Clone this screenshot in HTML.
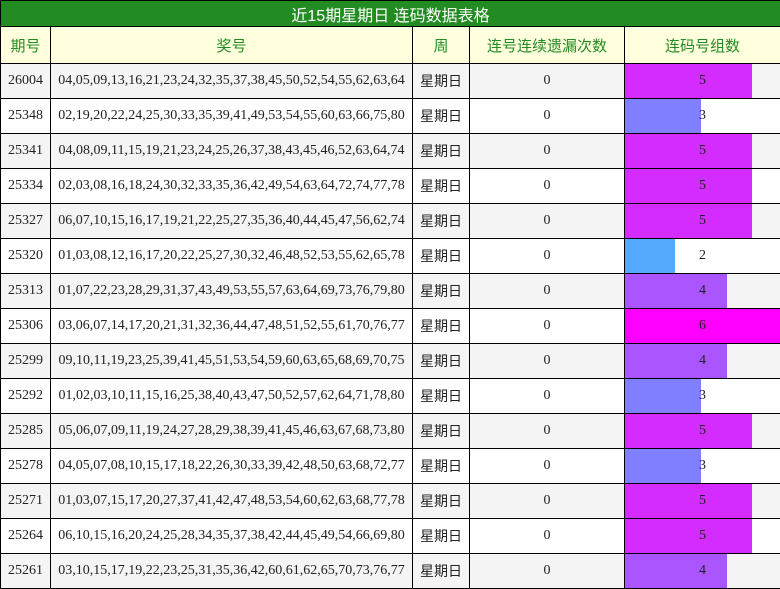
<!DOCTYPE html>
<html><head><meta charset="utf-8"><style>
body{margin:0;background:#fff;}
table{border-collapse:collapse;table-layout:fixed;width:780px;font-family:"Liberation Serif","Noto Sans CJK SC",serif;font-size:14px;color:#222;}
td{border:1px solid #000;text-align:center;padding:0;height:34px;white-space:nowrap;overflow:hidden;}
tr:nth-child(odd) td{background:#f4f4f4;}
tr:nth-child(even) td{background:#fff;}
tr.t td{background:#228b22;color:#fff;height:25px;font-family:"Liberation Sans","Noto Sans CJK SC",sans-serif;font-size:16px;}
tr.h td{background:#ffffdd;color:#228b22;height:36px;font-family:"Liberation Sans","Noto Sans CJK SC",sans-serif;font-size:15px;}
td.w{font-family:"Noto Sans CJK SC",sans-serif;font-size:14px;}
td.b{position:relative;}
td.b div{position:absolute;left:0;top:0;bottom:0;}
td.b span{position:relative;}
</style></head><body>
<table>
<colgroup><col style="width:50px"><col style="width:362px"><col style="width:57px"><col style="width:155px"><col style="width:156px"></colgroup>
<tr class="t"><td colspan="5">近15期星期日 连码数据表格</td></tr>
<tr class="h"><td>期号</td><td>奖号</td><td>周</td><td>连号连续遗漏次数</td><td>连码号组数</td></tr>
<tr><td>26004</td><td>04,05,09,13,16,21,23,24,32,35,37,38,45,50,52,54,55,62,63,64</td><td class="w">星期日</td><td>0</td><td class="b"><div style="width:127px;background:#d42bff"></div><span>5</span></td></tr>
<tr><td>25348</td><td>02,19,20,22,24,25,30,33,35,39,41,49,53,54,55,60,63,66,75,80</td><td class="w">星期日</td><td>0</td><td class="b"><div style="width:76px;background:#7f7fff"></div><span>3</span></td></tr>
<tr><td>25341</td><td>04,08,09,11,15,19,21,23,24,25,26,37,38,43,45,46,52,63,64,74</td><td class="w">星期日</td><td>0</td><td class="b"><div style="width:127px;background:#d42bff"></div><span>5</span></td></tr>
<tr><td>25334</td><td>02,03,08,16,18,24,30,32,33,35,36,42,49,54,63,64,72,74,77,78</td><td class="w">星期日</td><td>0</td><td class="b"><div style="width:127px;background:#d42bff"></div><span>5</span></td></tr>
<tr><td>25327</td><td>06,07,10,15,16,17,19,21,22,25,27,35,36,40,44,45,47,56,62,74</td><td class="w">星期日</td><td>0</td><td class="b"><div style="width:127px;background:#d42bff"></div><span>5</span></td></tr>
<tr><td>25320</td><td>01,03,08,12,16,17,20,22,25,27,30,32,46,48,52,53,55,62,65,78</td><td class="w">星期日</td><td>0</td><td class="b"><div style="width:50px;background:#55aaff"></div><span>2</span></td></tr>
<tr><td>25313</td><td>01,07,22,23,28,29,31,37,43,49,53,55,57,63,64,69,73,76,79,80</td><td class="w">星期日</td><td>0</td><td class="b"><div style="width:102px;background:#aa55ff"></div><span>4</span></td></tr>
<tr><td>25306</td><td>03,06,07,14,17,20,21,31,32,36,44,47,48,51,52,55,61,70,76,77</td><td class="w">星期日</td><td>0</td><td class="b"><div style="width:156px;background:#ff00ff"></div><span>6</span></td></tr>
<tr><td>25299</td><td>09,10,11,19,23,25,39,41,45,51,53,54,59,60,63,65,68,69,70,75</td><td class="w">星期日</td><td>0</td><td class="b"><div style="width:102px;background:#aa55ff"></div><span>4</span></td></tr>
<tr><td>25292</td><td>01,02,03,10,11,15,16,25,38,40,43,47,50,52,57,62,64,71,78,80</td><td class="w">星期日</td><td>0</td><td class="b"><div style="width:76px;background:#7f7fff"></div><span>3</span></td></tr>
<tr><td>25285</td><td>05,06,07,09,11,19,24,27,28,29,38,39,41,45,46,63,67,68,73,80</td><td class="w">星期日</td><td>0</td><td class="b"><div style="width:127px;background:#d42bff"></div><span>5</span></td></tr>
<tr><td>25278</td><td>04,05,07,08,10,15,17,18,22,26,30,33,39,42,48,50,63,68,72,77</td><td class="w">星期日</td><td>0</td><td class="b"><div style="width:76px;background:#7f7fff"></div><span>3</span></td></tr>
<tr><td>25271</td><td>01,03,07,15,17,20,27,37,41,42,47,48,53,54,60,62,63,68,77,78</td><td class="w">星期日</td><td>0</td><td class="b"><div style="width:127px;background:#d42bff"></div><span>5</span></td></tr>
<tr><td>25264</td><td>06,10,15,16,20,24,25,28,34,35,37,38,42,44,45,49,54,66,69,80</td><td class="w">星期日</td><td>0</td><td class="b"><div style="width:127px;background:#d42bff"></div><span>5</span></td></tr>
<tr><td>25261</td><td>03,10,15,17,19,22,23,25,31,35,36,42,60,61,62,65,70,73,76,77</td><td class="w">星期日</td><td>0</td><td class="b"><div style="width:102px;background:#aa55ff"></div><span>4</span></td></tr>
</table>
</body></html>
